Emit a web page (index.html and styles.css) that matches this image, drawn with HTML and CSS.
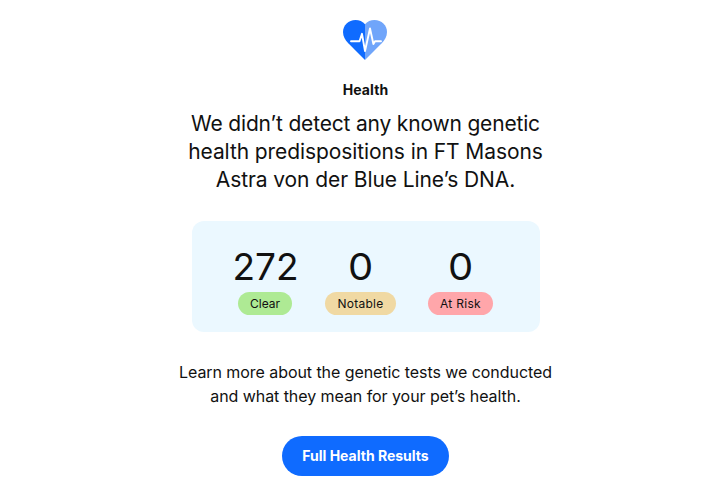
FILE: index.html
```html
<!DOCTYPE html>
<html lang="en">
<head>
<meta charset="utf-8">
<title>Health</title>
<link rel="stylesheet" href="styles.css">
</head>
<body>
<main class="health">
  <svg class="heart" width="44" height="40" viewBox="0 0 44 40" aria-hidden="true">
    <path fill="#0f6bff" d="M22 4.3C19.8 1.5 16.2 0 12.5 0C5.5 0 0 5.2 0 12C0 16.6 2.1 19.9 5.3 23.2L22 40Z"/>
    <path fill="#70a5fa" d="M22 4.3C24.2 1.5 27.8 0 31.5 0C38.5 0 44 5.2 44 12C44 16.6 41.9 19.9 38.7 23.2L22 40Z"/>
    <path fill="none" stroke="#fff" stroke-width="1.9" stroke-linejoin="round" stroke-linecap="round" d="M8 21.3H16.5L19 13.8L22 31L27 8.5L30.4 24L32 21.3H38"/>
  </svg>
  <h2 class="label">Health</h2>
  <h1 class="headline"><span class="l1">We didn’t detect any known genetic</span><br><span class="l2">health predispositions in FT Masons</span><br><span class="l3">Astra von der Blue Line’s DNA.</span></h1>
  <section class="stats">
    <div class="stat"><span class="count">272</span><span class="pill clear">Clear</span></div>
    <div class="stat"><span class="count zero">0</span><span class="pill notable">Notable</span></div>
    <div class="stat"><span class="count zero">0</span><span class="pill risk">At Risk</span></div>
  </section>
  <p class="copy">Learn more about the genetic tests we conducted<br>and what they mean for your pet’s health.</p>
  <a class="button">Full Health Results</a>
</main>
</body>
</html>
```
FILE: styles.css
```css
* { box-sizing: border-box; }
body { margin: 0; background: #fff; color: #111; font-family: Inter, "Liberation Sans", sans-serif; }
.health { display: flex; flex-direction: column; align-items: center; width: 724px; height: 493px; padding: 20px 0 0 7px; text-align: center; overflow: hidden; }
.heart { display: block; flex: none; margin-right: 1px; }
.label { margin: 20px 0 0; font-size: 14px; line-height: 20px; font-weight: 700; letter-spacing: 0.1px; }
.headline { margin: 10px 0 0; font-size: 21px; line-height: 28px; font-weight: 400; white-space: nowrap; }
.l1 { letter-spacing: -0.18px; }
.l2, .l3 { letter-spacing: -0.09px; }
.stats { display: grid; grid-template-columns: 94px 96px 104px; justify-content: center; width: 348px; height: 111px; margin-top: 27px; padding: 26px 0 0; background: #ebf8ff; border-radius: 12px; }
.stat { display: flex; flex-direction: column; align-items: center; }
.count { font-size: 37px; line-height: 40px; font-weight: 400; }
.zero { transform: scaleX(1.08); }
.pill { height: 23px; margin-top: 5px; border-radius: 12px; font-size: 12px; line-height: 23px; }
.clear { width: 54px; margin-right: 1px; background: #aeea94; }
.notable { width: 71px; letter-spacing: 0.25px; background: #f0d9a3; }
.risk { width: 65px; letter-spacing: 0.3px; background: #ffa6aa; }
.copy { margin: 28px 0 0; font-size: 16px; line-height: 24px; letter-spacing: -0.065px; white-space: nowrap; }
.button { width: 167px; height: 40px; margin-top: 28px; border-radius: 20px; background: #0f6bff; color: #fff; font-size: 14px; line-height: 40px; font-weight: 700; white-space: nowrap; }
```
